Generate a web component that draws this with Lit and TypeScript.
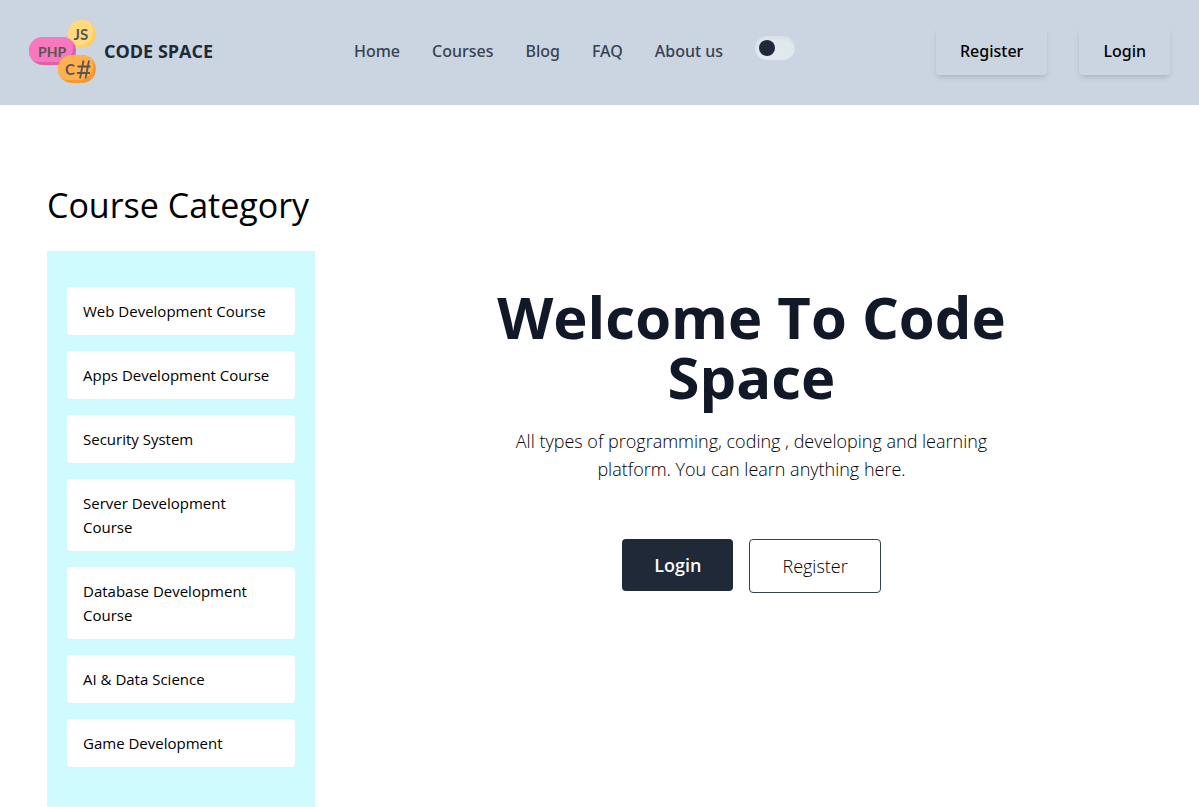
import { LitElement, html, css, svg } from "lit";
import { customElement, state } from "lit/decorators.js";

const NAV_ITEMS = ["Home", "Courses", "Blog", "FAQ", "About us"];

const CATEGORIES = [
  "Web Development Course",
  "Apps Development Course",
  "Security System",
  "Server Development Course",
  "Database Development Course",
  "AI & Data Science",
  "Game Development",
];

const logo = svg`
  <defs>
    <clipPath id="js"><circle cx="53" cy="14" r="14" /></clipPath>
    <clipPath id="php"><rect x="0" y="17" width="47" height="28" rx="14" /></clipPath>
    <clipPath id="cs"><rect x="29" y="35" width="38" height="28" rx="14" /></clipPath>
  </defs>
  <g clip-path="url(#js)">
    <rect x="39" y="0" width="28" height="28" fill="#ffcd66" />
    <circle cx="50" cy="11.5" r="14" fill="#ffdb80" />
  </g>
  <g clip-path="url(#php)">
    <rect x="0" y="17" width="47" height="28" fill="#e060a8" />
    <rect x="-4" y="13" width="48" height="29" rx="14" fill="#f878c0" />
  </g>
  <g clip-path="url(#cs)">
    <rect x="29" y="35" width="38" height="28" fill="#f99a28" />
    <rect x="25" y="31" width="39" height="29" rx="14" fill="#ffb050" />
  </g>
  <g class="logo-text">
    <text x="44.500" y="19.500" font-size="15">JS</text>
    <text x="9" y="37" font-size="14">PHP</text>
    <text x="36" y="55" font-size="15">C</text>
  </g>
  <path d="M54.500 40.500l-3.500 18M60 40.500l-3.500 18M48.500 46.500h13M48 53h13" fill="none" stroke="#5a5550" stroke-width="1.800" />
`;

@customElement("app-root")
export class AppRoot extends LitElement {
  @state() private dark = false;

  static styles = css`
    :host {
      display: block;
      min-height: 100vh;
      background: #fff;
      color: #000;
      font: 400 15px/24px "Open Sans", "Noto Sans", sans-serif;
    }
    * { box-sizing: border-box; }
    a { color: inherit; text-decoration: none; }
    button { font: inherit; cursor: pointer; }
    ul { list-style: none; margin: 0; padding: 0; }
    .header {
      display: flex;
      align-items: center;
      justify-content: space-between;
      padding: 18px 29px 22px;
      background: #cbd5e1;
    }
    .brand { display: flex; align-items: center; gap: 7px; color: #1f2937; font-size: 18px; font-weight: 700; }
    .logo { display: block; width: 68px; height: 65px; }
    .logo-text { font-family: Lato, sans-serif; font-weight: 700; fill: #5a5550; }
    .nav { display: flex; align-items: center; gap: 32px; color: #374151; font: 500 16px/24px "Noto Sans", sans-serif; }
    .menu { display: flex; gap: 32px; }
    .toggle {
      appearance: none;
      display: block;
      width: 40px;
      height: 24px;
      margin: 0 0 6px;
      padding: 4px;
      border-radius: 12px;
      background: #e2e8f0;
      box-shadow: inset 0 2px 4px rgb(0 0 0 / 5%);
      cursor: pointer;
    }
    .toggle::before { content: ""; display: block; width: 16px; height: 16px; border-radius: 50%; background: #1f2937; }
    .toggle:checked::before { margin-left: 16px; }
    .account { display: flex; gap: 32px; font: 500 16px/24px "Noto Sans", sans-serif; }
    .account-link {
      padding: 12px 24px;
      border: 0;
      border-radius: 4px;
      background: #cbd5e1;
      color: #000;
      box-shadow: 0 4px 6px -1px rgb(0 0 0 / 10%), 0 2px 4px -1px rgb(0 0 0 / 6%);
    }
    .main {
      display: grid;
      grid-template-columns: 268px minmax(0, 1fr);
      column-gap: 36px;
      padding: 80px 47px 0;
    }
    .heading { margin: 0 0 26px; font-size: 34px; font-weight: 400; line-height: 40px; white-space: nowrap; }
    .categories {
      display: flex;
      flex-direction: column;
      gap: 16px;
      padding: 36px 20px 40px;
      background: #cffafe;
    }
    .category { display: block; padding: 12px 16px; border-radius: 4px; background: #fff; }
    .hero { display: flex; flex-direction: column; align-items: center; padding: 102px 16px 0; text-align: center; }
    .title { max-width: 576px; margin: 0; color: #111827; font-size: 58px; font-weight: 700; line-height: 60px; }
    .lead { max-width: 512px; margin: 20px 0 56px; color: #000; font-size: 18px; font-weight: 300; line-height: 28px; }
    .actions { display: flex; align-items: flex-start; gap: 16px; font-size: 18px; line-height: 28px; }
    .action { padding: 12px 32px; border: 0; border-radius: 4px; background: #1f2937; color: #f9fafb; font-weight: 600; }
    .action.outline { border: 1px solid #374151; background: #fff; color: #000; font-weight: 300; }
  `;

  render() {
    return html`
      <header class="header">
        <a class="brand" href="#home">
          <svg class="logo" viewBox="0 -2 68 65" aria-hidden="true">${logo}</svg>
          <span>CODE SPACE</span>
        </a>
        <nav class="nav">
          <ul class="menu">
            ${NAV_ITEMS.map((item) => html`<li><a href="#${item}">${item}</a></li>`)}
          </ul>
          <input
            class="toggle"
            type="checkbox"
            aria-label="Dark mode"
            .checked=${this.dark}
            @change=${() => (this.dark = !this.dark)}
          />
        </nav>
        <div class="account">
          <button class="account-link" type="button">Register</button>
          <button class="account-link" type="button">Login</button>
        </div>
      </header>
      <main class="main">
        <aside>
          <h2 class="heading">Course Category</h2>
          <ul class="categories">
            ${CATEGORIES.map((name) => html`<li><a class="category" href="#course">${name}</a></li>`)}
          </ul>
        </aside>
        <section class="hero">
          <h1 class="title">Welcome To Code Space</h1>
          <p class="lead">All types of programming, coding , developing and learning platform. You can learn anything here.</p>
          <div class="actions">
            <button class="action" type="button">Login</button>
            <button class="action outline" type="button">Register</button>
          </div>
        </section>
      </main>
    `;
  }
}
